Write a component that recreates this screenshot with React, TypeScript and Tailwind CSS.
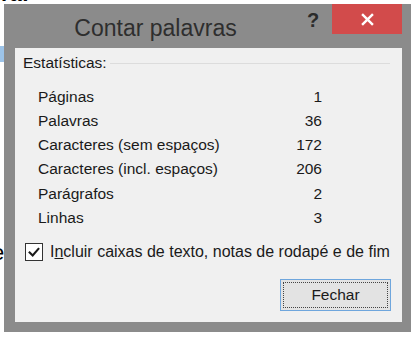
const stats: [string, string][] = [
  ['Páginas', '1'],
  ['Palavras', '36'],
  ['Caracteres (sem espaços)', '172'],
  ['Caracteres (incl. espaços)', '206'],
  ['Parágrafos', '2'],
  ['Linhas', '3'],
];

function CheckMark() {
  return (
    <svg viewBox="0 0 16 16" className="h-[14px] w-[14px]">
      <path d="M3 8.5 L6.5 12 L13 4.5" fill="none" stroke="#1a1a1a" strokeWidth="2.4" strokeLinecap="square" />
    </svg>
  );
}

export default function App() {
  return (
    <div
      className="relative h-[337px] w-[419px] overflow-hidden bg-white text-[#1a1a1a]"
      style={{ fontFamily: '"Liberation Sans", Arial, sans-serif' }}
    >
      {/* bits of the document behind the dialog */}
      <span className="absolute left-[1px] top-[-19px] text-[22px] leading-[26px] font-bold text-black">ra:</span>
      <span className="absolute left-[-8px] top-[240px] text-[22px] leading-[26px] text-black">e</span>
      <div className="absolute left-0 top-[46px] h-[16px] w-[4px] bg-[#9cc3e8]" />

      <div className="absolute left-[4px] top-[4px] flex h-[328px] w-[407px] flex-col bg-[#8b8b8b]">
        <div className="flex h-[44px] shrink-0">
          <div className="flex flex-1 items-center justify-center pt-[4px] text-[23px] text-[#2e2e2e]">
            Contar palavras
          </div>
          <div className="flex w-[25px] items-start pt-[5px] text-[20px] leading-[22px] font-bold text-[#2b2b2b]">?</div>
          <div className="mr-[9px] flex h-[30px] w-[70px] items-center justify-center bg-[#d24b4b]">
            <svg viewBox="0 0 12 12" className="h-[13px] w-[13px]">
              <path d="M1 1 L11 11 M11 1 L1 11" stroke="white" strokeWidth="2.2" />
            </svg>
          </div>
        </div>

        <div className="mb-[10px] ml-[11px] mr-[9px] flex flex-1 flex-col bg-[#f0f0f0] text-[15.5px]">
          <div className="flex h-[20px] items-center pl-[8px] pt-[10px] pr-[12px]">
            <span>Estatísticas:</span>
            <div className="ml-[3px] h-px flex-1 bg-[#dcdcdc]" />
          </div>

          <div className="mt-[16px] flex w-[307px] flex-col pl-[23px]">
            {stats.map(([label, value]) => (
              <div key={label} className="flex h-[24.3px] items-center justify-between">
                <span>{label}</span>
                <span>{value}</span>
              </div>
            ))}
          </div>

          <div className="mt-[10px] flex h-[24px] items-center pl-[10px]">
            <div className="flex h-[18px] w-[18px] shrink-0 items-center justify-center border border-[#333] bg-white">
              <CheckMark />
            </div>
            <span className="ml-[7px] whitespace-nowrap text-[16px]">
              I<span className="underline">n</span>cluir caixas de texto, notas de rodapé e de fim
            </span>
          </div>

          <div className="mt-[15px] flex justify-end pr-[11px]">
            <div className="flex h-[32px] w-[111px] items-center justify-center border border-[#6fa6dd] bg-[#e3e3e3] p-[2px]">
              <div className="flex h-full w-full items-center justify-center border border-dotted border-[#444]">
                Fechar
              </div>
            </div>
          </div>
        </div>
      </div>
    </div>
  );
}
